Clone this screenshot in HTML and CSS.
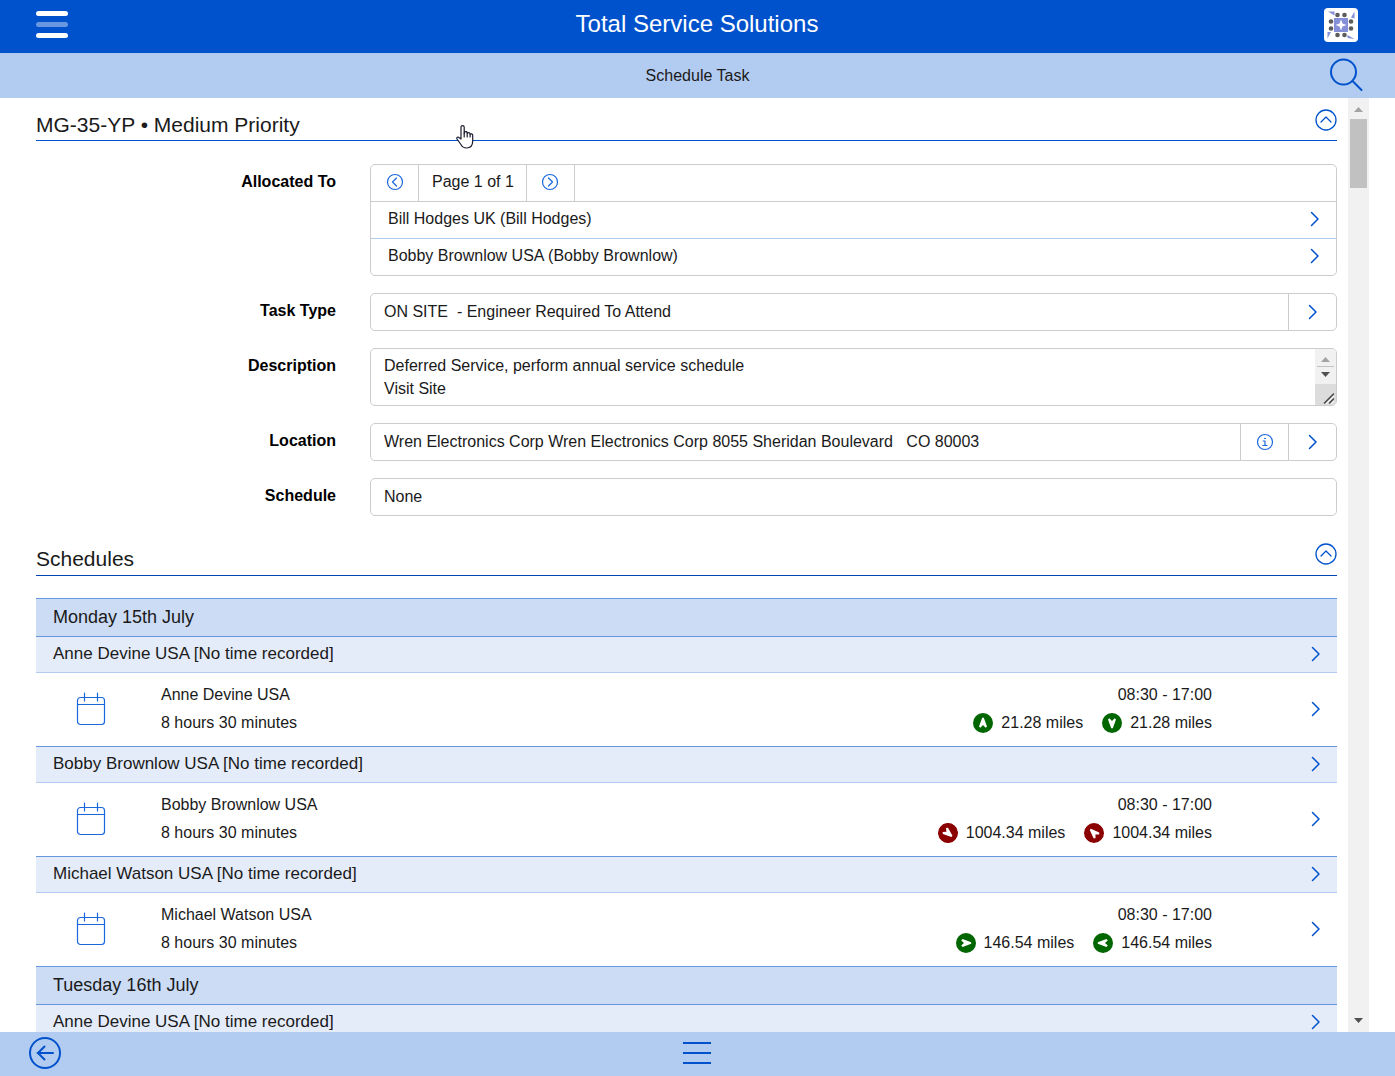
FILE: index.html
```html
<!DOCTYPE html>
<html lang="en">
<head>
    <meta charset="UTF-8">
    <meta name="viewport" content="width=device-width, initial-scale=1.0">
    <title>Total Service Solutions</title>
    <link rel="stylesheet" href="styles.css">
</head>
<body>
    <svg class="symbols" aria-hidden="true">
        <symbol id="chevron" viewBox="0 0 10 16"><path d="M1.5 1.5 8 8l-6.500 6.500"/></symbol>
        <symbol id="collapse" viewBox="0 0 22 22"><circle cx="11" cy="11" r="10"/><path d="m6 13 5-5 5 5"/></symbol>
        <symbol id="calendar" viewBox="0 0 30 34"><rect x="1.500" y="5.500" width="27" height="27" rx="3"/><path d="M1.500 12.500h27M8.500 1v8M21.500 1v8"/></symbol>
        <symbol id="direction" viewBox="0 0 20 20"><circle cx="10" cy="10" r="10"/><path class="needle" d="M9.200 4.800h1.600L14 13.400 12.600 14.800 10 12 7.400 14.800 6 13.400z"/></symbol>
    </svg>

    <header class="top-bar">
        <button class="menu" aria-label="Menu"><span></span><span></span><span></span></button>
        <h1>Total Service Solutions</h1>
        <button class="logo" aria-label="Home">
            <svg viewBox="0 0 34 34">
                <rect width="34" height="34" rx="4" fill="#fff"/>
                <g fill="#8590d8">
                    <rect x="10" y="10" width="14" height="14"/>
                    <path d="M4 3.500h6.500v4zM30.500 3.500v7L27 9.500zM3.500 24h3.500l-3.500 6.500zM23.500 27l7 4-7-1z"/>
                </g>
                <path d="M17 11.500 18.500 15.500 22.500 17 18.500 18.500 17 22.500 15.500 18.500 11.500 17 15.500 15.500z" fill="#fff"/>
                <g fill="#5c5c5c">
                    <circle cx="13.500" cy="7" r="2.300"/><circle cx="20.500" cy="7" r="2.300"/>
                    <circle cx="13.500" cy="27" r="2.300"/><circle cx="20.500" cy="27" r="2.300"/>
                    <circle cx="7" cy="13.500" r="2.300"/><circle cx="7" cy="20.500" r="2.300"/>
                    <circle cx="27" cy="13.500" r="2.300"/><circle cx="27" cy="20.500" r="2.300"/>
                </g>
            </svg>
        </button>
    </header>

    <div class="sub-bar">
        <span>Schedule Task</span>
        <button class="search" aria-label="Search">
            <svg viewBox="0 0 34 34"><circle cx="14.500" cy="14" r="12.500"/><path d="m23.500 23 9 9"/></svg>
        </button>
    </div>

    <div class="viewport">
        <main>
            <div class="section-title">
                <h2>MG-35-YP • Medium Priority</h2>
                <button aria-label="Collapse task"><svg class="icon-collapse"><use href="#collapse"/></svg></button>
                <svg class="pointer" viewBox="0 0 18 24" aria-hidden="true">
                    <path d="M5 14V2.200a1.500 1.500 0 0 1 3.200 0V8.500V7.500c.5-1.200 2.600-1.200 3 0V8.300c.5-1 2.500-1 2.900.3V9.300c.6-.8 2.600-.6 2.600 1V16c0 4-2.200 7-6.200 7-3 0-4.500-1.500-5.600-3.500L1 14c-.7-1.600 1.200-2.400 2.200-1.300z"/>
                    <path d="M8.200 8v4M11.200 8.500V12M14.100 9.500V12"/>
                </svg>
            </div>

            <form class="details">
                <span class="label" id="allocated">Allocated To</span>
                <div class="box list" role="group" aria-labelledby="allocated">
                    <div class="pager">
                        <button type="button" class="cell" aria-label="Previous page">
                            <svg class="icon-round" viewBox="0 0 18 18"><circle cx="9" cy="9" r="7.500"/><path d="M10.500 5 6.500 9l4 4"/></svg>
                        </button>
                        <span class="page">Page 1 of 1</span>
                        <button type="button" class="cell" aria-label="Next page">
                            <svg class="icon-round" viewBox="0 0 18 18"><circle cx="9" cy="9" r="7.500"/><path d="m7.500 5 4 4-4 4"/></svg>
                        </button>
                    </div>
                    <button type="button" class="person">Bill Hodges UK (Bill Hodges)<svg class="icon-chevron"><use href="#chevron"/></svg></button>
                    <button type="button" class="person">Bobby Brownlow USA (Bobby Brownlow)<svg class="icon-chevron"><use href="#chevron"/></svg></button>
                </div>

                <label class="label" for="type">Task Type</label>
                <div class="box field">
                    <input type="text" id="type" value="ON SITE&nbsp; - Engineer Required To Attend" readonly>
                    <button type="button" class="cell" aria-label="Open task type"><svg class="icon-chevron"><use href="#chevron"/></svg></button>
                </div>

                <label class="label" for="description">Description</label>
                <div class="box description">
                    <textarea id="description" readonly>Deferred Service, perform annual service schedule
Visit Site</textarea>
                    <div class="mini-scroll" aria-hidden="true">
                        <svg viewBox="0 0 21 35"><path d="m6 13 4.500-5 4.500 5z" fill="#a3a3a3"/><path d="M2 17h17v1H2z" fill="#c1c1c1"/><path d="m6 23 4.500 5 4.500-5z" fill="#505050"/></svg>
                        <svg class="grip" viewBox="0 0 21 21"><path d="m9.500 19 9-9M14.500 19l4-4" stroke="#444" stroke-width="1.500"/><path d="m11.500 19.500 7.500-7.500M16.500 19.500l2-2" stroke="#fff"/></svg>
                    </div>
                </div>

                <label class="label" for="location">Location</label>
                <div class="box field">
                    <input type="text" id="location" value="Wren Electronics Corp Wren Electronics Corp 8055 Sheridan Boulevard &nbsp; CO 80003" readonly>
                    <button type="button" class="cell" aria-label="Location information">
                        <svg class="icon-round" viewBox="0 0 18 18"><circle cx="9" cy="9" r="7.500"/><path d="M7.200 8H9v4.500M7 12.500h4M8.500 5.500h1"/></svg>
                    </button>
                    <button type="button" class="cell" aria-label="Open location"><svg class="icon-chevron"><use href="#chevron"/></svg></button>
                </div>

                <label class="label" for="schedule">Schedule</label>
                <div class="box field"><input type="text" id="schedule" value="None" readonly></div>
            </form>

            <div class="section-title dark">
                <h2>Schedules</h2>
                <button aria-label="Collapse schedules"><svg class="icon-collapse"><use href="#collapse"/></svg></button>
            </div>

            <div class="schedules">
                <h3>Monday 15th July</h3>

                <button class="engineer">Anne Devine USA [No time recorded]<svg class="icon-chevron"><use href="#chevron"/></svg></button>
                <button class="shift">
                    <svg class="icon-calendar"><use href="#calendar"/></svg>
                    <span class="who">Anne Devine USA<br>8 hours 30 minutes</span>
                    <span class="when">
                        <span>08:30 - 17:00</span>
                        <span class="miles">
                            <svg class="near"><use href="#direction"/></svg>21.28 miles
                            <svg class="near south"><use href="#direction"/></svg>21.28 miles
                        </span>
                    </span>
                    <svg class="icon-chevron"><use href="#chevron"/></svg>
                </button>

                <button class="engineer">Bobby Brownlow USA [No time recorded]<svg class="icon-chevron"><use href="#chevron"/></svg></button>
                <button class="shift">
                    <svg class="icon-calendar"><use href="#calendar"/></svg>
                    <span class="who">Bobby Brownlow USA<br>8 hours 30 minutes</span>
                    <span class="when">
                        <span>08:30 - 17:00</span>
                        <span class="miles">
                            <svg class="far southeast"><use href="#direction"/></svg>1004.34 miles
                            <svg class="far northwest"><use href="#direction"/></svg>1004.34 miles
                        </span>
                    </span>
                    <svg class="icon-chevron"><use href="#chevron"/></svg>
                </button>

                <button class="engineer">Michael Watson USA [No time recorded]<svg class="icon-chevron"><use href="#chevron"/></svg></button>
                <button class="shift">
                    <svg class="icon-calendar"><use href="#calendar"/></svg>
                    <span class="who">Michael Watson USA<br>8 hours 30 minutes</span>
                    <span class="when">
                        <span>08:30 - 17:00</span>
                        <span class="miles">
                            <svg class="near east"><use href="#direction"/></svg>146.54 miles
                            <svg class="near west"><use href="#direction"/></svg>146.54 miles
                        </span>
                    </span>
                    <svg class="icon-chevron"><use href="#chevron"/></svg>
                </button>

                <h3>Tuesday 16th July</h3>
                <button class="engineer">Anne Devine USA [No time recorded]<svg class="icon-chevron"><use href="#chevron"/></svg></button>
            </div>
        </main>

        <div class="scrollbar" aria-hidden="true">
            <svg viewBox="0 0 21 21"><path d="m6 14 4.500-5 4.500 5z" fill="#a3a3a3"/></svg>
            <div class="thumb"></div>
            <svg class="down" viewBox="0 0 21 21"><path d="m6 7 4.500 5L15 7z" fill="#505050"/></svg>
        </div>
    </div>

    <footer class="bottom-bar">
        <button class="back" aria-label="Back">
            <svg viewBox="0 0 32 32"><circle cx="16" cy="16" r="15"/><path d="M24 16H8.500M15.500 9.500 9 16l6.500 6.500"/></svg>
        </button>
        <button class="actions" aria-label="Actions"><span></span><span></span><span></span></button>
    </footer>
</body>
</html>
```
FILE: styles.css
```css
* {
    box-sizing: border-box;
}

body {
    margin: 0;
    height: 100vh;
    display: flex;
    flex-direction: column;
    overflow: hidden;
    font-family: Arial, "Liberation Sans", sans-serif;
    font-size: 16px;
    color: #1a1a1a;
    background: #fff;
}

h1, h2, h3 {
    margin: 0;
    font-weight: normal;
}

button, input, textarea {
    margin: 0;
    padding: 0;
    border: 0;
    background: none;
    font: inherit;
    color: inherit;
    text-align: left;
}

button {
    cursor: pointer;
}

svg {
    display: block;
    flex: none;
    fill: none;
    stroke-linecap: round;
    stroke-linejoin: round;
}

.symbols {
    position: absolute;
    width: 0;
    height: 0;
}

/* bars */
.top-bar, .sub-bar, .bottom-bar {
    flex: none;
    display: grid;
    grid-template-columns: 1fr auto 1fr;
    align-items: center;
}

.top-bar {
    height: 53px;
    padding: 0 37px 6px 36px;
    background: #0052cc;
}

.top-bar h1 {
    font-size: 24px;
    line-height: 28px;
    color: #fff;
}

.menu {
    width: 32px;
    display: flex;
    flex-direction: column;
    gap: 6px;
    margin-top: 2px;
}

.menu span {
    height: 5px;
    border-radius: 3px;
    background: #fff;
}

.menu span:nth-child(2) {
    background: #6697e0;
}

.logo {
    justify-self: end;
    margin-top: 3px;
}

.logo svg {
    width: 34px;
    height: 34px;
}

.sub-bar {
    height: 45px;
    padding: 0 32px 2px;
    background: #b2cbf0;
}

.sub-bar span {
    grid-column: 2;
    line-height: 20px;
    margin-top: 3px;
}

.search {
    justify-self: end;
}

.search svg {
    width: 34px;
    height: 34px;
    stroke: #0052cc;
    stroke-width: 2;
}

.bottom-bar {
    height: 44px;
    padding: 0 31px 3px 29px;
    background: #b2cbf0;
}

.back svg {
    width: 32px;
    height: 32px;
    stroke: #0052cc;
    stroke-width: 2;
}

.actions {
    width: 28px;
    display: flex;
    flex-direction: column;
    gap: 8px;
}

.actions span {
    height: 2px;
    background: #0052cc;
}

/* content */
.viewport {
    flex: 1;
    min-height: 0;
    display: flex;
    gap: 11px;
    padding: 0 26px 0 36px;
}

main {
    flex: 1;
    min-width: 0;
    overflow: hidden;
}

.section-title {
    position: relative;
    height: 43px;
    display: flex;
    justify-content: space-between;
    align-items: flex-end;
    border-bottom: 1px solid #0052cc;
}

.section-title.dark {
    margin-top: 17px;
    padding-bottom: 1px;
    border-color: #0047b3;
}

.section-title h2 {
    font-size: 21px;
    line-height: 30px;
}

.section-title button {
    padding-bottom: 9px;
}

.icon-collapse {
    width: 22px;
    height: 22px;
    stroke: #0052cc;
    stroke-width: 1.3;
}

.pointer {
    position: absolute;
    left: 420px;
    top: 27px;
    width: 18px;
    height: 24px;
    fill: #fff;
    stroke: #1a1a2e;
    stroke-width: 1.2;
}

.details {
    display: grid;
    grid-template-columns: 300px 1fr;
    gap: 17px 34px;
    padding-top: 23px;
}

.label {
    text-align: right;
    font-weight: bold;
    line-height: 36px;
    color: #000;
}

.box {
    border: 1px solid #ccc;
    border-radius: 5px;
    overflow: hidden;
}

.pager {
    display: flex;
    height: 37px;
    border-bottom: 1px solid #ccc;
}

.pager .cell {
    padding-bottom: 3px;
}

.pager .cell:first-child {
    width: 47px;
    border-left: 0;
}

.pager .cell:last-child {
    border-right: 1px solid #ccc;
    width: 49px;
}

.page {
    padding: 0 12px 0 13px;
    border-left: 1px solid #ccc;
    line-height: 34px;
}

.cell {
    flex: none;
    width: 48px;
    display: flex;
    align-items: center;
    justify-content: center;
    padding-bottom: 1px;
    border-left: 1px solid #ccc;
}

.person {
    width: 100%;
    height: 36px;
    display: flex;
    align-items: center;
    justify-content: space-between;
    padding: 0 16px 2px 17px;
}

.person + .person {
    height: 37px;
    border-top: 1px solid #b2cbf0;
}

.icon-chevron {
    width: 10px;
    height: 16px;
    stroke: #0052cc;
    stroke-width: 1.5;
}

.icon-round {
    width: 18px;
    height: 18px;
    stroke: #1a66dd;
    stroke-width: 1.2;
}

.field {
    display: flex;
    height: 38px;
}

.field input {
    flex: 1;
    min-width: 0;
    padding: 0 13px 1px;
}

.description {
    display: flex;
    height: 58px;
}

.description textarea {
    flex: 1;
    padding: 5px 13px;
    line-height: 23px;
    resize: none;
    overflow: hidden;
}

.mini-scroll {
    width: 21px;
    background: #f1f1f1;
}

.grip {
    background: #dcdcdc;
}

/* schedule list */
.schedules {
    margin-top: 22px;
}

.schedules h3 {
    height: 38px;
    padding-left: 17px;
    border-top: 1px solid #6697e0;
    background: #ccdcf5;
    font-size: 18px;
    line-height: 36px;
}

.engineer {
    width: 100%;
    height: 37px;
    display: flex;
    align-items: center;
    justify-content: space-between;
    padding: 0 16px 2px 17px;
    border-top: 1px solid #6697e0;
    border-bottom: 1px solid #b2cbf0;
    background: #e5ecf9;
    font-size: 17px;
}

.shift {
    width: 100%;
    height: 73px;
    display: flex;
    align-items: center;
    padding: 0 16px 2px 40px;
    line-height: 28px;
}

.icon-calendar {
    width: 30px;
    height: 34px;
    margin-right: 55px;
    stroke: #1a66dd;
    stroke-width: 1.2;
}

.when {
    margin-left: auto;
    margin-right: 99px;
    text-align: right;
}

.when > span {
    display: block;
}

.when .miles {
    display: flex;
    align-items: center;
    gap: 8px;
}

.miles svg {
    width: 20px;
    height: 20px;
}

.miles svg + svg {
    margin-left: 11px;
}

.near {
    fill: #060;
}

.far {
    fill: #8b0000;
}

.needle {
    fill: #fff;
}

.south {
    transform: rotate(180deg);
}

.southeast {
    transform: rotate(130deg);
}

.northwest {
    transform: rotate(-45deg);
}

.east {
    transform: rotate(90deg);
}

.west {
    transform: rotate(-90deg);
}

.scrollbar {
    width: 21px;
    display: flex;
    flex-direction: column;
    background: #f1f1f1;
}

.scrollbar .thumb {
    height: 69px;
    margin: 0 2px;
    background: #c1c1c1;
}

.scrollbar .down {
    margin-top: auto;
}
```
